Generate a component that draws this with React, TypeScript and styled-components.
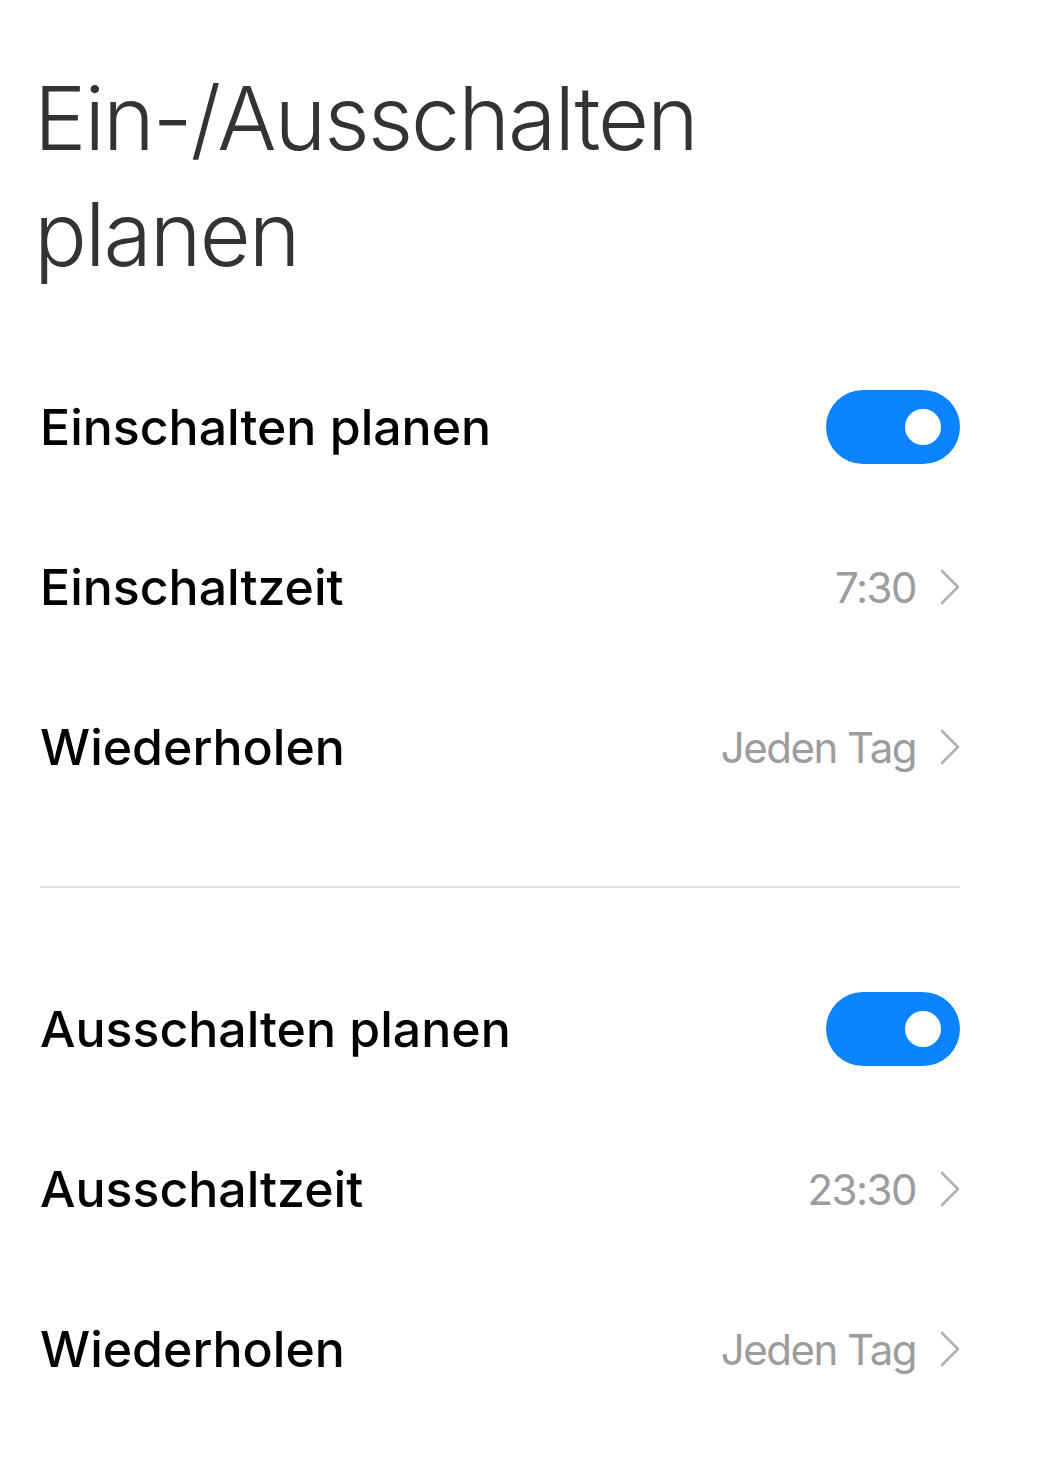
import React, { useState } from "react";
import styled, { createGlobalStyle } from "styled-components";

const GlobalStyle = createGlobalStyle`
  html, body {
    margin: 0;
    padding: 0;
    background: #ffffff;
  }
  body {
    font-family: Inter, "Noto Sans", "Liberation Sans", sans-serif;
  }
`;

type Row = {
  label: string;
  value?: string;
  toggle?: boolean;
};

const sections: Row[][] = [
  [
    { label: "Einschalten planen", toggle: true },
    { label: "Einschaltzeit", value: "7:30" },
    { label: "Wiederholen", value: "Jeden Tag" },
  ],
  [
    { label: "Ausschalten planen", toggle: true },
    { label: "Ausschaltzeit", value: "23:30" },
    { label: "Wiederholen", value: "Jeden Tag" },
  ],
];

function Chevron() {
  return (
    <ChevronSvg width="20" height="36" viewBox="0 0 20 36">
      <polyline
        points="2,2 18,18 2,34"
        fill="none"
        stroke="#b0b0b0"
        strokeWidth="2.6"
        strokeLinecap="round"
        strokeLinejoin="round"
      />
    </ChevronSvg>
  );
}

export default function App() {
  const [toggles, setToggles] = useState<Record<string, boolean>>({
    "0-0": true,
    "1-0": true,
  });

  return (
    <Page>
      <GlobalStyle />
      <Title>
        Ein-/Ausschalten
        <br />
        planen
      </Title>
      {sections.map((rows, si) => (
        <React.Fragment key={si}>
          {si > 0 && <Divider />}
          <Section>
            {rows.map((row, ri) => {
              const key = `${si}-${ri}`;
              return (
                <ItemRow key={key}>
                  <Label>{row.label}</Label>
                  {row.toggle ? (
                    <Switch
                      $on={!!toggles[key]}
                      onClick={() =>
                        setToggles((t) => ({ ...t, [key]: !t[key] }))
                      }
                    >
                      <Knob />
                    </Switch>
                  ) : (
                    <ValueBox>
                      <Value>{row.value}</Value>
                      <Chevron />
                    </ValueBox>
                  )}
                </ItemRow>
              );
            })}
          </Section>
        </React.Fragment>
      ))}
    </Page>
  );
}

const Page = styled.div`
  width: 1040px;
  min-height: 1479px;
  box-sizing: border-box;
  padding: 60px 80px 0 40px;
  background: #ffffff;
`;

const Title = styled.h1`
  margin: 0 0 55px -6px;
  font-size: 88px;
  line-height: 116px;
  font-weight: 300;
  color: #333333;
  letter-spacing: -2px;
`;

const Section = styled.div`
  display: flex;
  flex-direction: column;
`;

const ItemRow = styled.div`
  height: 160px;
  display: flex;
  align-items: center;
  justify-content: space-between;
`;

const Label = styled.div`
  font-size: 50px;
  font-weight: 500;
  color: #000000;
`;

const ValueBox = styled.div`
  display: flex;
  align-items: center;
  gap: 24px;
`;

const Value = styled.div`
  font-size: 42px;
  font-weight: 400;
  color: #9c9c9c;
  letter-spacing: -1.5px;
`;

const ChevronSvg = styled.svg`
  display: block;
`;

const Switch = styled.div<{ $on: boolean }>`
  width: 134px;
  height: 74px;
  border-radius: 37px;
  background: ${(p) => (p.$on ? "#0d84ff" : "#e5e5e5")};
  display: flex;
  align-items: center;
  justify-content: ${(p) => (p.$on ? "flex-end" : "flex-start")};
  padding: 0 19px;
  box-sizing: border-box;
  cursor: pointer;
`;

const Knob = styled.div`
  width: 36px;
  height: 36px;
  border-radius: 50%;
  background: #ffffff;
`;

const Divider = styled.div`
  height: 2px;
  background: #e3e3e3;
  margin: 59px 0 61px;
`;
